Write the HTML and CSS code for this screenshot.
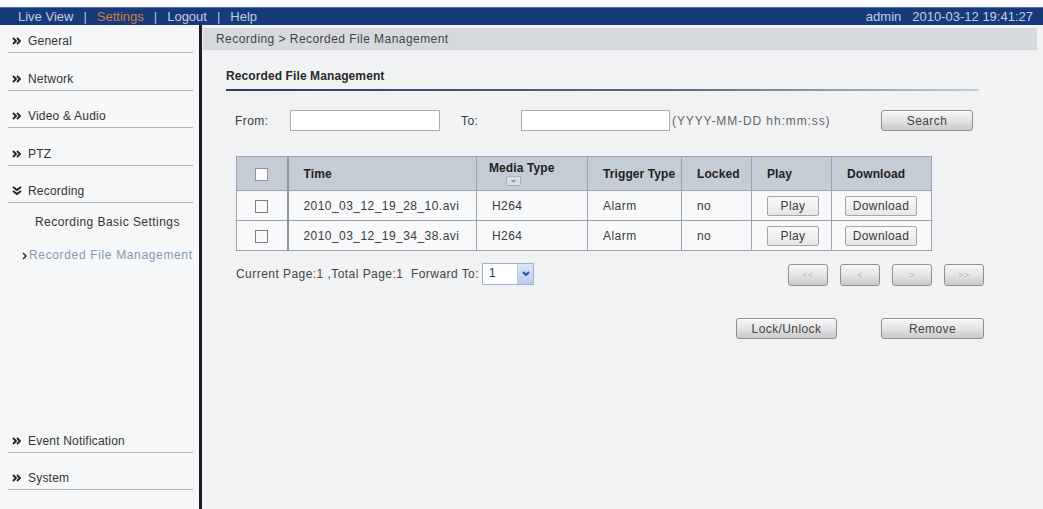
FILE: index.html
```html
<!DOCTYPE html>
<html>
<head>
<meta charset="utf-8">
<title>Recorded File Management</title>
<link rel="stylesheet" href="styles.css">
</head>
<body>
<div class="topstrip"></div>
<header class="topbar">
  <nav class="topnav">
    <span class="tn">Live View</span><span class="sep">|</span><span class="tn active">Settings</span><span class="sep">|</span><span class="tn">Logout</span><span class="sep">|</span><span class="tn">Help</span>
  </nav>
  <div class="userinfo"><span class="user">admin</span><span class="clock">2010-03-12 19:41:27</span></div>
</header>
<div class="layout">
  <aside class="sidebar">
    <div class="menu-top">
      <div class="mi first"><svg class="ico" viewBox="0 0 10 8"><path d="M1 1l3 3-3 3M5 1l3 3-3 3" fill="none" stroke="#222" stroke-width="1.8"/></svg><span>General</span></div>
      <div class="mi"><svg class="ico" viewBox="0 0 10 8"><path d="M1 1l3 3-3 3M5 1l3 3-3 3" fill="none" stroke="#222" stroke-width="1.8"/></svg><span>Network</span></div>
      <div class="mi"><svg class="ico" viewBox="0 0 10 8"><path d="M1 1l3 3-3 3M5 1l3 3-3 3" fill="none" stroke="#222" stroke-width="1.8"/></svg><span>Video &amp; Audio</span></div>
      <div class="mi"><svg class="ico" viewBox="0 0 10 8"><path d="M1 1l3 3-3 3M5 1l3 3-3 3" fill="none" stroke="#222" stroke-width="1.8"/></svg><span>PTZ</span></div>
      <div class="mi"><svg class="ico down" viewBox="0 0 10 10"><path d="M1 1l4 3 4-3M1 5l4 3 4-3" fill="none" stroke="#222" stroke-width="1.8"/></svg><span>Recording</span></div>
      <div class="sub">
        <div class="si">Recording Basic Settings</div>
        <div class="si current"><svg class="sico" viewBox="0 0 6 8"><path d="M1 1l3 3-3 3" fill="none" stroke="#333" stroke-width="1.6"/></svg>Recorded File Management</div>
      </div>
    </div>
    <div class="menu-bottom">
      <div class="mi"><svg class="ico" viewBox="0 0 10 8"><path d="M1 1l3 3-3 3M5 1l3 3-3 3" fill="none" stroke="#222" stroke-width="1.8"/></svg><span>Event Notification</span></div>
      <div class="mi"><svg class="ico" viewBox="0 0 10 8"><path d="M1 1l3 3-3 3M5 1l3 3-3 3" fill="none" stroke="#222" stroke-width="1.8"/></svg><span>System</span></div>
    </div>
  </aside>
  <main class="main">
    <div class="crumb">Recording &gt; Recorded File Management</div>
    <section class="content">
      <h1 class="title">Recorded File Management</h1>
      <div class="search-row">
        <label class="lbl-from">From:</label>
        <div class="inp"></div>
        <label class="lbl-to">To:</label>
        <div class="inp inp2"></div>
        <span class="hint">(YYYY-MM-DD hh:mm:ss)</span>
        <button class="btn btn-search">Search</button>
      </div>
      <table class="files">
        <colgroup>
          <col style="width:51px"><col style="width:189px"><col style="width:111px"><col style="width:94px"><col style="width:70px"><col style="width:80px"><col style="width:100px">
        </colgroup>
        <thead>
          <tr>
            <th class="c-chk"><span class="chk hdr"></span></th>
            <th>Time</th>
            <th class="c-media"><div>Media Type</div><span class="dd"><svg viewBox="0 0 14 9"><path d="M4 3.5h6l-3 3z" fill="#8a96a8"/></svg></span></th>
            <th>Trigger Type</th>
            <th>Locked</th>
            <th>Play</th>
            <th>Download</th>
          </tr>
        </thead>
        <tbody>
          <tr>
            <td class="c-chk"><span class="chk"></span></td>
            <td class="c-time">2010_03_12_19_28_10.avi</td>
            <td>H264</td>
            <td>Alarm</td>
            <td>no</td>
            <td><button class="tbtn play">Play</button></td>
            <td><button class="tbtn dl">Download</button></td>
          </tr>
          <tr>
            <td class="c-chk"><span class="chk"></span></td>
            <td class="c-time">2010_03_12_19_34_38.avi</td>
            <td>H264</td>
            <td>Alarm</td>
            <td>no</td>
            <td><button class="tbtn play">Play</button></td>
            <td><button class="tbtn dl">Download</button></td>
          </tr>
        </tbody>
      </table>
      <div class="pager-row">
        <span class="pageinfo">Current Page:1 ,Total Page:1 &nbsp;Forward To:</span>
        <div class="select"><span class="sv">1</span><span class="sarrow"><svg viewBox="0 0 10 8"><path d="M2 2l3 3 3-3" fill="none" stroke="#2a4aa0" stroke-width="1.8"/></svg></span></div>
        <div class="pager">
          <button class="btn pbtn">&lt;&lt;</button>
          <button class="btn pbtn">&lt;</button>
          <button class="btn pbtn">&gt;</button>
          <button class="btn pbtn">&gt;&gt;</button>
        </div>
      </div>
      <div class="actions">
        <button class="btn btn-lock">Lock/Unlock</button>
        <button class="btn btn-remove">Remove</button>
      </div>
    </section>
  </main>
</div>
</body>
</html>
```

FILE: styles.css
```css
* { box-sizing: border-box; }
html, body { margin: 0; padding: 0; }
body {
  width: 1043px;
  height: 509px;
  overflow: hidden;
  background: #ffffff;
  font-family: "Liberation Sans", Arial, sans-serif;
  font-size: 12px;
  color: #3a3a3a;
}
.topstrip { height: 7px; background: #fdfdfd; }
.topbar {
  height: 18px;
  background: #163a7a;
  border-top: 1px solid #5a6f9a;
  display: flex;
  align-items: center;
  justify-content: space-between;
  padding: 0 10px 0 18px;
  color: #c5cee0;
  font-size: 13px;
}
.topnav { display: flex; align-items: center; }
.topnav .sep { margin: 0 10px; color: #b9c4da; }
.topnav .active { color: #c9823f; }
.userinfo .user { margin-right: 11px; }

.layout { display: flex; height: 484px; }

.sidebar {
  width: 202px;
  flex: none;
  background: #f6f7f8;
  border-right: 3px solid #1e1e22;
  display: flex;
  flex-direction: column;
  justify-content: space-between;
  padding: 0 6px 19px 8px;
}
.mi {
  height: 37.5px;
  border-bottom: 1px solid #b2b4b8;
  display: flex;
  align-items: flex-end;
  padding: 0 0 3px 4px;
  line-height: 16px;
  color: #333;
  letter-spacing: 0.2px;
}
.mi.first { height: 28px; }
.ico { width: 10px; height: 8px; margin: 0 6px 4px 0; flex: none; }
.ico.down { height: 10px; margin-bottom: 3px; }
.sub { padding-top: 3px; }
.si {
  height: 33px;
  line-height: 33px;
  padding-left: 27px;
  color: #333;
  white-space: nowrap;
  letter-spacing: 0.45px;
}
.si.current { padding-left: 14px; color: #8797ad; display: flex; align-items: center; letter-spacing: 0.65px; }
.sico { width: 6px; height: 8px; margin-right: 1px; }
.menu-bottom .mi { height: 37px; }

.main {
  flex: 1;
  background: #f1f2f4;
  padding: 3px 6px 0 1px;
  letter-spacing: 0.45px;
}
.crumb {
  height: 22px;
  line-height: 22px;
  background: #d6d9de;
  padding-left: 13px;
  color: #444;
}
.content { padding-left: 23px; }
.title {
  margin: 18px 0 0;
  width: 753px;
  font-size: 12px;
  font-weight: bold;
  line-height: 16px;
  padding-bottom: 5px;
  color: #2a2a2a;
  letter-spacing: 0.1px;
  border-bottom: 2px solid;
  border-image: linear-gradient(to right, #2c3a62, #5d6888 60%, #c7cbd3) 1;
}
.search-row {
  margin: 19px 0 0 9px;
  width: 738px;
  height: 21px;
  display: flex;
  align-items: center;
}
.lbl-from { width: 55px; }
.inp {
  width: 150px;
  height: 21px;
  background: #fff;
  border: 1px solid #a9acb2;
}
.inp2 { width: 149px; }
.lbl-to { width: 60px; margin-left: 21px; }
.hint { margin-left: 2px; color: #666; font-size: 12px; letter-spacing: 0.9px; }
.btn {
  font-family: "Liberation Sans", Arial, sans-serif;
  font-size: 12px;
  letter-spacing: 0.4px;
  color: #444;
  background: linear-gradient(#f7f7f7, #e4e4e4 50%, #c9cacc);
  border: 1px solid #8e9094;
  border-radius: 3px;
  height: 21px;
  padding: 0;
  box-shadow: inset 0 1px 0 #fff;
}
.btn-search { margin-left: auto; width: 92px; }

.files {
  margin: 25px 0 0 10px;
  border-collapse: collapse;
  table-layout: fixed;
  width: 695px;
  background: #f8f9fa;
}
.files th, .files td {
  border: 1px solid #9ea3aa;
  text-align: left;
  padding: 0 0 0 15px;
  white-space: nowrap;
}
.files th {
  height: 34px;
  background: #c4ccd6;
  font-weight: bold;
  color: #222;
  font-size: 12px;
  letter-spacing: 0.1px;
}
.files td { height: 30px; color: #3a3a3a; }
.files .c-chk { padding: 0; text-align: center; border-right: 2px solid #8f959d; }
.files th.c-media { padding: 0 0 0 12px; line-height: 14px; }
.files .c-time { padding-left: 15px; }
.chk {
  display: inline-block;
  width: 13px;
  height: 13px;
  border: 1px solid #7a7e84;
  background: #fafafa;
  vertical-align: middle;
}
.chk.hdr { background: #fff; border-color: #8e939a; }
.dd {
  display: block;
  width: 15px;
  height: 10px;
  margin: 1px 0 0 17px;
  border: 1px solid #a8b0bc;
  border-radius: 2px;
  background: #d8dee6;
}
.dd svg { display: block; width: 13px; height: 8px; }
.tbtn {
  font-family: "Liberation Sans", Arial, sans-serif;
  font-size: 12px;
  letter-spacing: 0.4px;
  color: #3a3a3a;
  height: 20px;
  padding: 0;
  background: linear-gradient(#fafafa, #e6e6e6);
  border: 1px solid #a4a6aa;
  border-radius: 2px;
}
.tbtn.play { width: 52px; }
.tbtn.dl { width: 72px; margin-left: -2px; }

.pager-row {
  margin: 12px 0 0 10px;
  width: 748px;
  height: 22px;
  display: flex;
  align-items: center;
}
.pageinfo { color: #444; }
.select {
  margin-left: 3px;
  width: 52px;
  height: 22px;
  background: #fff;
  border: 1px solid #9fb3d0;
  display: flex;
  justify-content: space-between;
}
.sv { padding-left: 6px; line-height: 18px; color: #333; }
.sarrow {
  width: 16px;
  background: linear-gradient(#dbe5f6, #b8cbed);
  border-left: 1px solid #c0cfe8;
  display: flex;
  align-items: center;
  justify-content: center;
}
.sarrow svg { width: 10px; height: 8px; }
.pager { margin-left: auto; display: flex; gap: 12px; margin-top: 2px; }
.pbtn { width: 40px; height: 22px; color: #b8b8b8; font-size: 9px; }

.actions {
  margin: 33px 0 0 10px;
  width: 748px;
  display: flex;
  justify-content: flex-end;
  gap: 44px;
}
.btn-lock { width: 101px; }
.btn-remove { width: 103px; }
```
